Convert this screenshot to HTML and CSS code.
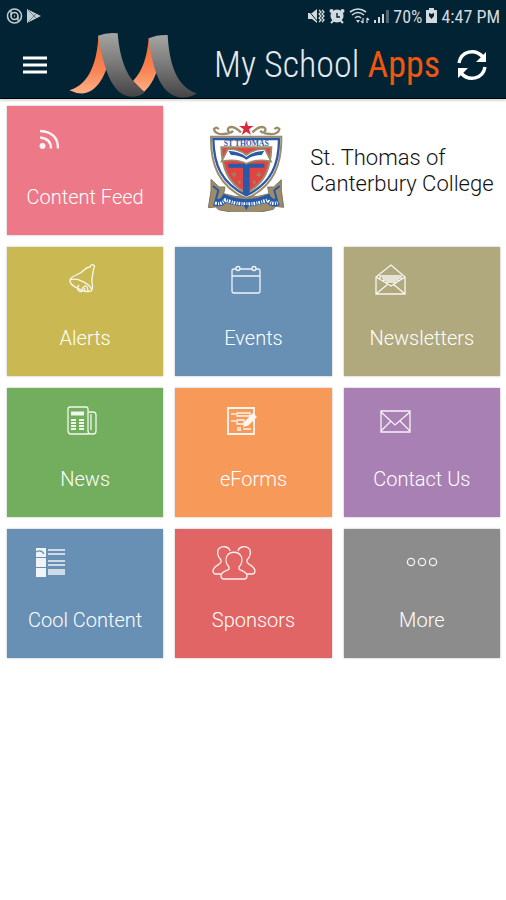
FILE: index.html
```
<!DOCTYPE html>
<html lang="en">
<head>
  <meta charset="UTF-8">
  <meta name="viewport" content="width=device-width, initial-scale=1">
  <title>My School Apps</title>
  <link rel="stylesheet" href="styles.css">
</head>
<body>

  <header class="header">
    <div class="status">
      <svg width="17" height="16" viewBox="0 0 17 16" fill="none" stroke="#c3ccd2">
        <circle cx="8.5" cy="8" r="7" stroke-width="1.6"/>
        <circle cx="8.5" cy="8" r="3.5" stroke-width="1.6"/>
        <path d="M5 3v4M12 13V9M8 8h1" stroke-width="1.4"/>
      </svg>
      <svg width="14" height="16" viewBox="0 0 14 16">
        <path d="M0 1L14 8L0 15z" fill="#c3ccd2"/>
        <path d="M1 2l8 8M1 14l8-8" stroke="#6c7c86" fill="none"/>
      </svg>
      <span class="spacer"></span>
      <svg width="18" height="16" viewBox="0 0 18 16" fill="#d3dade">
        <path d="M1 5h4l5-4v14l-5-4H1z"/>
        <path d="M0 1l11 13" stroke="#012334" stroke-width="1"/>
        <path d="M12 2l2 2-2 2 2 2-2 2 2 2-2 2M15 2l2 2-2 2 2 2-2 2 2 2-2 2" fill="none" stroke="#d3dade" stroke-width="1.3"/>
      </svg>
      <svg width="16" height="16" viewBox="0 0 16 16" fill="#d3dade">
        <circle cx="8" cy="8" r="6.5"/>
        <circle cx="2.5" cy="3" r="2"/><circle cx="13.5" cy="3" r="2"/>
        <path d="M2 15l3-3M14 15l-3-3" stroke="#d3dade" stroke-width="2"/>
        <path d="M8 5v4h3" fill="none" stroke="#012334" stroke-width="1.4"/>
      </svg>
      <svg width="21" height="16" viewBox="0 0 21 16" fill="none" stroke="#d3dade" stroke-width="1.6">
        <path d="M1 4q8-6 16 0M3 7q6-5 12 0M6 10q3-3 6 0"/>
        <path d="M7 12h4l-2 3z" fill="#d3dade" stroke="none"/>
        <path d="M14 10v5M12 13l2 2M18 15v-5M20 12l-2-2" stroke-width="1.2"/>
      </svg>
      <svg width="15" height="16" viewBox="0 0 15 16" fill="#d3dade">
        <path d="M0 12h2v3H0zM4 9h2v6H4zM8 6h2v9H8z"/><path d="M12 2h3v13h-3z" fill="#52646f"/>
      </svg>
      <span>70%</span>
      <svg width="11" height="16" viewBox="0 0 11 16">
        <path d="M3 0h5v2h3v13H0V2h3z" fill="#d3dade"/>
        <path d="M3 5l2.5 1L8 5v3l-2.5 3L3 8z" fill="#012334"/>
      </svg>
      <span>4:47 PM</span>
    </div>

    <div class="bar">
      <button class="icon-button" aria-label="Menu">
        <svg width="24" height="18" viewBox="0 0 24 18">
          <path d="M0 2h24M0 9h24M0 16h24" stroke="#fff" stroke-width="3"/>
        </svg>
      </button>
      <svg class="logo" width="128" height="66" viewBox="207 93 384 198">
        <defs>
          <linearGradient id="orange" x1="0" y1="0" x2="0" y2="1">
            <stop offset="0" stop-color="#f0682f"/>
            <stop offset=".6" stop-color="#f98455"/>
            <stop offset="1" stop-color="#ffb184"/>
          </linearGradient>
          <linearGradient id="grey" x1="0" y1="0" x2="0" y2="1">
            <stop offset="0" stop-color="#a5a5a3"/>
            <stop offset=".5" stop-color="#777"/>
            <stop offset="1" stop-color="#444345"/>
          </linearGradient>
        </defs>
        <path d="M295 104C292 178 270 250 208 268Q230 279 252 277C290 270 313 230 326 182z" fill="url(#orange)"/>
        <path d="M446 112C441 170 428 210 399 240L432 273C454 254 468 224 477 190z" fill="url(#orange)"/>
        <path d="M294 104Q322 93 353 97C360 180 382 237 434 273C426 282 413 287 400 287C338 288 313 210 294 104z" fill="url(#grey)"/>
        <path d="M446 112Q470 101 503 102C508 190 530 257 590 277Q576 289 548 290C487 289 459 217 446 112z" fill="url(#grey)"/>
      </svg>
      <h1 class="title">My School <span>Apps</span></h1>
      <button class="icon-button" aria-label="Refresh">
        <svg width="32" height="32" viewBox="0 0 32 32" fill="none" stroke="#fff" stroke-width="3.4">
          <path d="M3 14C5 2 19-1 27 8M29 18C27 30 13 33 5 24"/>
          <path d="M30 3v10H20zM2 29V19h10z" fill="#fff" stroke="none"/>
        </svg>
      </button>
    </div>
  </header>

  <main class="grid">
    <a href="#" class="tile pink">
      <span class="tile-body">
        <svg class="icon" viewBox="0 0 44 44">
          <circle cx="15.5" cy="29" r="3" fill="#fff" stroke="none"/>
          <path d="M13 20.500q11 1 11 11M13 14q18 1 18 17.500" stroke-width="2.4"/>
        </svg>
        Content Feed
      </span>
    </a>

    <section class="school">
      <svg class="crest" width="80" height="92" viewBox="48 45 240 276">
        <g fill="none" stroke="#9c8c6c" stroke-width="7">
          <path d="M150 82C125 58 108 65 111 77q7 12 15 0M115 84C85 92 70 84 69 72q8-9 14 1M184 82C209 58 226 65 223 77q-7 12-15 0M219 84C249 92 264 84 265 72q-8-9-14 1"/>
        </g>
        <path d="M166 47l5 16h17l-14 10 6 17-14-10-14 10 6-17-14-10h17z" fill="#de263d"/>
        <path d="M60 95h211c2 82-22 149-105 186C82 244 58 177 60 95z" fill="#fff" stroke="#9c8c6c" stroke-width="6"/>
        <path d="M67 102h197c0 75-22 133-98 169C90 235 68 177 67 102z" fill="#fff" stroke="#2e59a3" stroke-width="7"/>
        <path d="M91 127h150c-2 62-18 105-75 138C109 232 93 189 91 127z" fill="#e44343" stroke="#9c8c6c" stroke-width="6"/>
        <text x="166" y="122" class="crest-name">ST THOMAS</text>
        <path d="M156 174h20v89l-10 7-10-7z" fill="#255baa"/>
        <path d="M112 176h108v12H112z" fill="#255baa"/>
        <path d="M92 169l18-36q33-2 56 17 23-19 56-17l18 36q-45-9-74 7-29-16-74-7z" fill="#fff" stroke="#9c8c6c" stroke-width="5"/>
        <path d="M112 137q35 2 54 19 19-17 54-19l-8 13q-27 0-46 14-19-14-46-14z" fill="#295aa5"/>
        <path d="M121 207l9-7 7 9-7 9zM195 209l9-9 8 9-8 8zM139 232l6-7 6 7-6 7zM184 232l6-7 6 7-6 7z" fill="#a17d5c"/>
        <path d="M60 223l24 23h18l-4 20q68 22 136 0l-4-20h18l23-22v31l7 52-24-3-7 9q-79 22-164 1l-9-8-22 2 8-50z" fill="#9c8c6c" stroke="#83775d" stroke-width="3"/>
        <path d="M66 243l16 13-9 34M266 243l-16 13 9 34" fill="none" stroke="#2559a7" stroke-width="6"/>
        <path d="M70 291Q90 299 102 280q64 26 128 0 12 19 32 10" fill="none" stroke="#2559a7" stroke-width="22"/>
        <path d="M72 294Q92 300 103 285q64 24 126 0 12 15 31 8" fill="none" stroke="#fff" stroke-width="10" stroke-dasharray="5 4 3 3"/>
        <path d="M158 300h16l-8 16z" fill="#2559a7"/>
      </svg>
      <h2 class="school-name">St. Thomas of<br>Canterbury College</h2>
    </section>

    <a href="#" class="tile gold">
      <span class="tile-body">
        <svg class="icon" viewBox="0 0 44 44">
          <path d="M10 22c1-5 9-4 14-10 2-2 4-3 6-3 1-4 6-2 4 1-1 2-1 6-2 10-1 5 2 8 0 12-3 5-24-4-22-10zM10 22c7-3 20 4 22 10M19 27c-5 7 5 9 6 3M22 31q5-7 6 2"/>
        </svg>
        Alerts
      </span>
    </a>
    <a href="#" class="tile blue">
      <span class="tile-body">
        <svg class="icon" viewBox="0 0 44 44">
          <path d="M12 11H10q-2 0-2 2v20q0 2 2 2h24q2 0 2-2V13q0-2-2-2h-2M16 11h12M8 18h28"/>
          <circle cx="14" cy="10.5" r="2"/><circle cx="30" cy="10.5" r="2"/>
        </svg>
        Events
      </span>
    </a>
    <a href="#" class="tile khaki">
      <span class="tile-body">
        <svg class="icon" viewBox="0 0 44 44">
          <path d="M7 19L22 7l14 12v17H7zM7 19l15 9 14-9M7 36l12-10M36 36L24 26M11 21v-3h21v3M13 20h18M14 22h16M17 24h10"/>
        </svg>
        Newsletters
      </span>
    </a>

    <a href="#" class="tile green">
      <span class="tile-body">
        <svg class="icon" viewBox="0 0 44 44">
          <path d="M29 35H11q-3 0-3-3V10q0-2 2-2h16q2 0 2 2v22q0 3 3 3h2q3 0 3-3V16q0-3-3-3h-5M31 15v16"/>
          <path d="M11 14.500h13" stroke-width="4"/>
          <path d="M11 21h5M19 21h5M11 24h5M19 24h5M11 27h5M19 27h5M11 30h5M19 30h5" stroke-width="2"/>
        </svg>
        News
      </span>
    </a>
    <a href="#" class="tile orange">
      <span class="tile-body">
        <svg class="icon" viewBox="0 0 44 44">
          <path d="M8 9h26v26H8z" stroke-width="1.8"/>
          <path d="M11 15h5M11 22h5M17 14h13v3H17zM17 21h7v4h-7zM17 29h4M23 30h8M17 31h4"/>
          <path d="M24 27l1-4 8-8 3 3-8 8z" fill="#fff"/>
        </svg>
        eForms
      </span>
    </a>
    <a href="#" class="tile purple">
      <span class="tile-body">
        <svg class="icon" viewBox="0 0 44 44">
          <path d="M8 12h29v21H8zM8 13l14 13 15-13M8 32l10-10M37 32L27 22"/>
        </svg>
        Contact Us
      </span>
    </a>

    <a href="#" class="tile blue">
      <span class="tile-body">
        <svg class="icon" viewBox="0 0 44 44">
          <path d="M8 8h10v9H8zM8 18h10v9H8zM8 28h10v9H8z" fill="#fff" stroke="none"/>
          <path d="M8 12q5-3 8 2" stroke="#6890b5"/>
          <path d="M20 10h17M20 14h17M20 21h17M20 25h17M20 30h17M20 32h17M20 34h17"/>
        </svg>
        Cool Content
      </span>
    </a>
    <a href="#" class="tile red">
      <span class="tile-body">
        <svg class="icon" viewBox="0 0 44 44">
          <path d="M17 27c-3-3-4-8-2-11 3-5 11-5 14 0 2 3 1 8-2 11v2c1 2 8 2 8 7 0 2-1 3-3 3H12c-2 0-3-1-3-3 0-5 7-5 8-7z"/>
          <path d="M18 11c-1-5-9-6-12-1-1 4 0 7 3 10v2c-1 3-8 4-8 9 0 2 1 3 3 3h5M26 11c1-5 9-6 12-1 1 4 0 7-3 10v2c1 3 8 4 8 9 0 2-1 3-3 3h-5"/>
        </svg>
        Sponsors
      </span>
    </a>
    <a href="#" class="tile grey">
      <span class="tile-body">
        <svg class="icon" viewBox="0 0 44 44">
          <circle cx="12" cy="22" r="3.6"/><circle cx="23" cy="22" r="3.6"/><circle cx="34" cy="22" r="3.6"/>
        </svg>
        More
      </span>
    </a>
  </main>

</body>
</html>
```
FILE: styles.css
```
body {
  margin: 0;
  font-family: Roboto, sans-serif;
  font-weight: 300;
  background: #fff;
  color: #111;
}

.header {
  background: #012334;
  border-bottom: 1px solid #000;
  box-shadow: 0 2px 2px #d8dbde;
}

.status {
  display: flex;
  align-items: center;
  gap: 4px;
  height: 32px;
  padding: 0 6px;
  font-family: "Roboto Condensed", Roboto, sans-serif;
  font-size: 18px;
  font-weight: 400;
  color: #d3dade;
}

.spacer {
  flex: 1;
}

.bar {
  display: flex;
  align-items: center;
  height: 66px;
  padding: 0 18px 0 23px;
}

.icon-button {
  display: flex;
  padding: 0;
  border: none;
  background: none;
  cursor: pointer;
}

.logo {
  margin-left: 22px;
}

.title {
  flex: 1;
  margin: 0 0 0 17px;
  font-family: "Roboto Condensed", Roboto, sans-serif;
  font-size: 36px;
  font-weight: 300;
  line-height: 40px;
  white-space: nowrap;
  color: #e3eaf0;
}

.title span {
  font-weight: 400;
  color: #f0560f;
}

.grid {
  display: grid;
  grid-template-columns: repeat(3, 1fr);
  grid-auto-rows: 129px;
  gap: 12px;
  padding: 7px 6px 7px 7px;
}

.tile {
  display: flex;
  justify-content: center;
  padding-top: 11px;
  color: #fff;
  font-size: 20px;
  line-height: 24px;
  text-decoration: none;
  box-shadow: 0 0 2px rgba(0, 0, 0, 0.3);
}

.icon {
  display: block;
  width: 44px;
  height: 44px;
  margin-bottom: 24px;
  fill: none;
  stroke: #fff;
  stroke-width: 1.3;
  opacity: 0.9;
}

.pink { background: #ed7887; }
.gold { background: #cab952; }
.blue { background: #6890b5; }
.khaki { background: #b0a97e; }
.green { background: #72ae5d; }
.orange { background: #f79a59; }
.purple { background: #a980b3; }
.red { background: #e16565; }
.grey { background: #8c8c8c; }

.school {
  grid-column: span 2;
  display: flex;
  align-items: center;
  gap: 23px;
  padding-left: 32px;
}

.crest {
  align-self: flex-start;
  margin-top: 14px;
}

.school-name {
  margin: 0;
  font-size: 22px;
  font-weight: 300;
  line-height: 26px;
  white-space: nowrap;
}

.crest-name {
  font-family: "Liberation Serif", serif;
  font-size: 23px;
  font-weight: 700;
  text-anchor: middle;
  fill: #2e59a3;
}
```
